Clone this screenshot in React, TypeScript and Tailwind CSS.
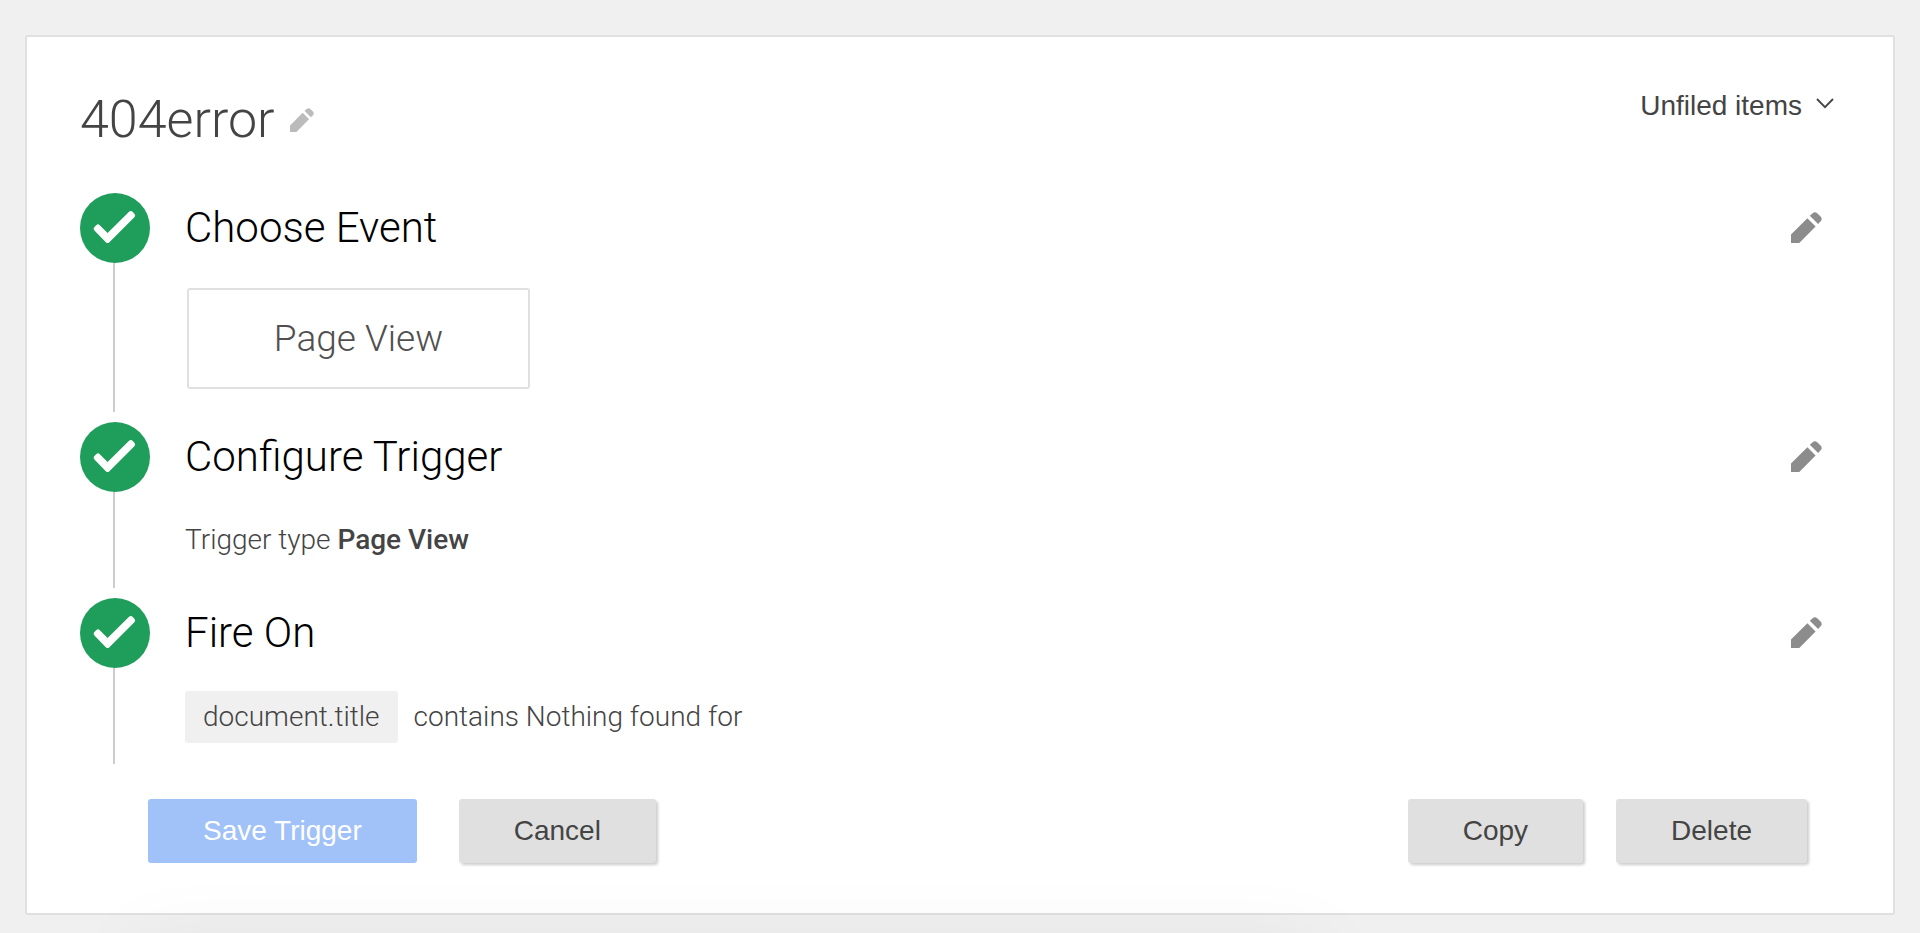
import React from "react";

function Pencil({ className }: { className: string }) {
  return (
    <svg viewBox="0 0 31 31" className={className} fill="currentColor" aria-hidden="true">
      <path d="M0 22.6 16.4 6.2 24.6 14.4 8.3 31H0Z" />
      <path d="M18.8 3.8 21.4 1.4Q23.8 -.8 26.2 1.2L29.6 4.6Q31.8 7 29.6 9.3L27.1 12Z" />
    </svg>
  );
}

function StepBadge() {
  return (
    <svg viewBox="0 0 70 70" className="size-[70px] shrink-0" aria-hidden="true">
      <circle cx="35" cy="35" r="35" fill="#1f9d5b" />
      <path
        d="M16.2 35.8 18 34 27.6 43.6 50.8 20.6 52.6 22.4 27.6 47.4Z"
        fill="#fff"
        stroke="#fff"
        strokeWidth="5"
        strokeLinejoin="round"
      />
    </svg>
  );
}

function Step({ title, children }: { title: string; children: React.ReactNode }) {
  return (
    <li className="flex gap-[35px]">
      <div className="flex flex-col items-center">
        <StepBadge />
        <div className="mr-0.5 w-0.5 grow bg-[#cccccc]" />
      </div>
      <div className="grow">
        <div className="mb-0.5 flex h-[68px] items-center justify-between pr-[71px]">
          <h2 className="text-[42px] font-light text-black">{title}</h2>
          <button type="button" aria-label={`Edit ${title}`} className="text-[#8c8c8c]">
            <Pencil className="size-[31px]" />
          </button>
        </div>
        {children}
      </div>
    </li>
  );
}

const buttonBase = "h-16 rounded-[3px] px-[55px] font-['Liberation_Sans',sans-serif] text-[28px]";
const grayButton = "bg-[#e0e0e0] text-[#444444] shadow-[2px_2px_3px_rgba(0,0,0,0.2)]";

export default function App() {
  return (
    <div className="relative min-h-screen overflow-hidden bg-[#f0f0f0] px-[25px] pt-[35px] pb-[17px] font-[Roboto,sans-serif] text-[#444444]">
      <main className="rounded-[3px] border-2 border-[#e0e0e0] bg-white pb-[50px] pl-[53px]">
        <header className="flex items-start justify-between pt-[51px] pr-[59px]">
          <div className="flex items-center gap-[15px]">
            <h1 className="text-[52px] leading-[64px] font-light">404error</h1>
            <button type="button" aria-label="Rename trigger" className="text-[#bbbbbb]">
              <Pencil className="size-6" />
            </button>
          </div>
          <button
            type="button"
            className="flex items-center gap-[14px] font-['Liberation_Sans',sans-serif] text-[28px] leading-9"
          >
            Unfiled items
            <svg viewBox="0 0 18 11" className="mb-1.5 h-[11px] w-[18px]" fill="none" stroke="currentColor" strokeWidth="1.8" aria-hidden="true">
              <path d="M1 1 9 9.2 17 1" />
            </svg>
          </button>
        </header>

        <ol className="flex flex-col gap-[10px] pt-[41px]">
          <Step title="Choose Event">
            <div className="pt-[25px] pb-[23px] pl-0.5">
              <div className="flex h-[101px] w-[343px] items-center justify-center rounded-[3px] border-2 border-[#e0e0e0] text-[37px] font-light text-[#505050]">
                Page View
              </div>
            </div>
          </Step>
          <Step title="Configure Trigger">
            <p className="pt-7 pb-7 text-[28px] leading-10 font-light">
              Trigger type <b className="font-medium">Page View</b>
            </p>
          </Step>
          <Step title="Fire On">
            <p className="flex items-center gap-4 pt-[23px] pb-[21px] text-[28px] font-light">
              <span className="rounded-[3px] bg-[#f0f0f0] px-[18px] leading-[52px]">document.title</span>
              <span>contains Nothing found for</span>
            </p>
          </Step>
        </ol>

        <footer className="flex justify-between pt-[35px] pr-[86px] pl-[68px]">
          <div className="flex gap-[42px]">
            <button type="button" className={`${buttonBase} bg-[#a1c2f8] text-white`}>Save Trigger</button>
            <button type="button" className={`${buttonBase} ${grayButton}`}>Cancel</button>
          </div>
          <div className="flex gap-[33px]">
            <button type="button" className={`${buttonBase} ${grayButton}`}>Copy</button>
            <button type="button" className={`${buttonBase} ${grayButton}`}>Delete</button>
          </div>
        </footer>
      </main>
      <div className="pointer-events-none absolute -bottom-14 left-[7%] h-10 w-[62%] shadow-[0_0_80px_rgba(0,0,0,0.08)]" />
    </div>
  );
}
